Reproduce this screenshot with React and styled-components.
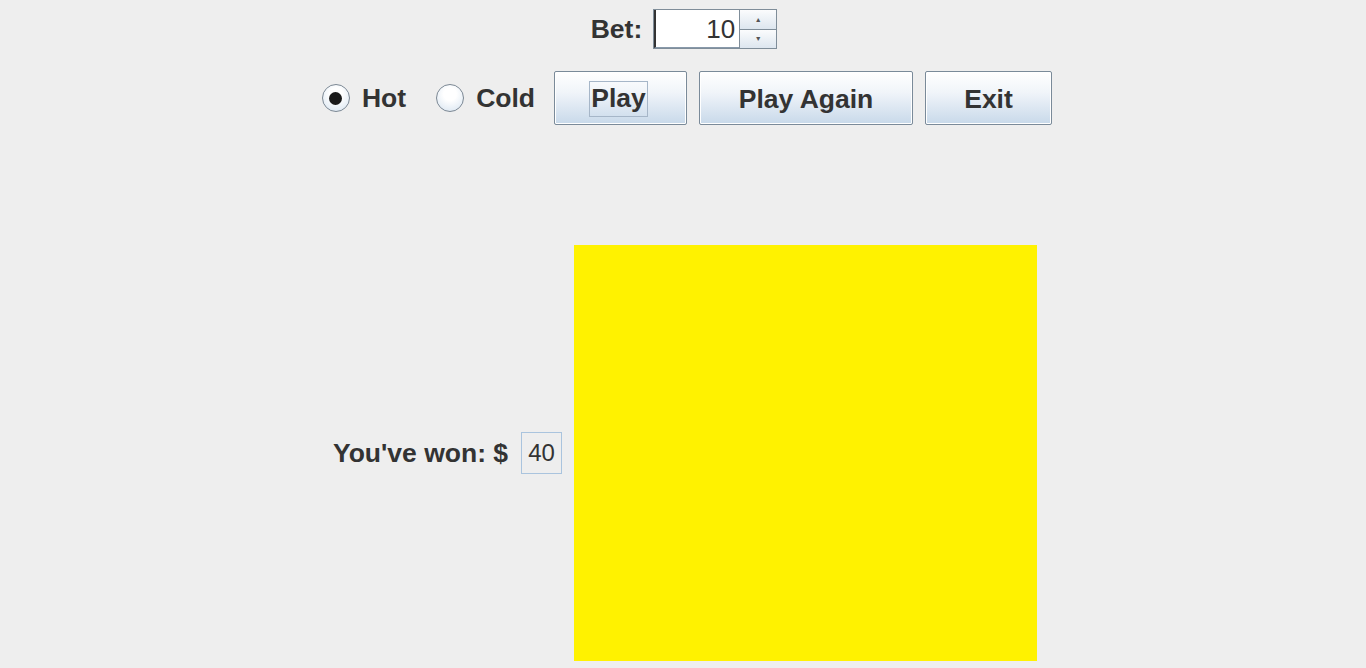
import styled, { createGlobalStyle } from "styled-components";

const GlobalStyle = createGlobalStyle`
  html, body {
    margin: 0;
    padding: 0;
    background: #eeeeee;
    font-family: "Liberation Sans", Arial, sans-serif;
    color: #333333;
  }
`;

const Page = styled.div`
  width: 1366px;
  height: 668px;
  overflow: hidden;
  display: flex;
  flex-direction: column;
  align-items: center;
`;

const BetRow = styled.div`
  display: flex;
  align-items: center;
  gap: 11px;
  margin-top: 9px;
  margin-left: 2px;
  height: 40px;
`;

const Label = styled.span`
  font-size: 26.5px;
  font-weight: bold;
  color: #333333;
  white-space: nowrap;
`;

const Spinner = styled.div`
  display: flex;
  height: 40px;
  border: 1px solid #7f8d99;
  box-sizing: border-box;
  background: #ffffff;
`;

const SpinnerField = styled.div`
  width: 85px;
  font-size: 26px;
  text-align: right;
  padding-right: 4px;
  box-sizing: border-box;
  line-height: 38px;
  color: #333333;
  border-left: 2px solid #333;
  border-bottom: 1px solid #8899aa;
`;

const Arrows = styled.div`
  display: flex;
  flex-direction: column;
  width: 36px;
  border-left: 1px solid #7f8d99;
`;

const Arrow = styled.div`
  flex: 1;
  display: flex;
  align-items: center;
  justify-content: center;
  background: linear-gradient(#fbfcfd, #dde6ef);
  border-top: ${({ $down }) => ($down ? "1px solid #7f8d99" : "none")};
  color: #555;
  font-size: 7px;
`;

const ControlRow = styled.div`
  display: flex;
  align-items: center;
  margin-top: 22px;
  margin-left: 8px;
  height: 54px;
`;

const Radio = styled.label`
  display: flex;
  align-items: center;
  gap: 12px;
  margin-right: ${({ $gap }) => $gap}px;
`;

const Circle = styled.span`
  width: 28px;
  height: 28px;
  border-radius: 50%;
  border: 1px solid #7c8894;
  box-sizing: border-box;
  background: radial-gradient(circle at 50% 35%, #ffffff 30%, #d5e2ef 100%);
  display: flex;
  align-items: center;
  justify-content: center;
  &::after {
    content: "";
    display: ${({ $checked }) => ($checked ? "block" : "none")};
    width: 13px;
    height: 13px;
    border-radius: 50%;
    background: #1a1a1a;
  }
`;

const Buttons = styled.div`
  display: flex;
  gap: 12px;
`;

const Button = styled.button`
  width: ${({ $w }) => $w}px;
  height: 54px;
  border: 1px solid #7a8a99;
  border-radius: 2px;
  background: linear-gradient(#ffffff 0%, #f0f4f9 40%, #c8d9ea 100%);
  font-family: "Liberation Sans", Arial, sans-serif;
  font-size: 26.5px;
  font-weight: bold;
  color: #333333;
  display: flex;
  align-items: center;
  justify-content: center;
  padding: 0;
  padding-top: 2px;
  box-shadow: inset 0 0 0 1px #ffffff;
`;

const Focus = styled.span`
  border: 1px solid #a6b6c8;
  padding: 4px 1px 6px 1px;
  line-height: 24px;
  margin-left: -4px;
`;

const ResultRow = styled.div`
  display: flex;
  align-items: center;
  margin-top: 120px;
  margin-left: 4px;
`;

const WonField = styled.div`
  width: 41px;
  height: 42px;
  box-sizing: border-box;
  border: 1px solid #aac4de;
  margin-left: 13px;
  margin-right: 12px;
  font-size: 24px;
  line-height: 40px;
  text-align: center;
  color: #333333;
`;

const Board = styled.div`
  width: 463px;
  height: 416px;
  background: #fff200;
`;

export default function App() {
  return (
    <Page>
      <GlobalStyle />
      <BetRow>
        <Label>Bet:</Label>
        <Spinner>
          <SpinnerField>10</SpinnerField>
          <Arrows>
            <Arrow>▲</Arrow>
            <Arrow $down>▼</Arrow>
          </Arrows>
        </Spinner>
      </BetRow>
      <ControlRow>
        <Radio $gap={30}>
          <Circle $checked />
          <Label>Hot</Label>
        </Radio>
        <Radio $gap={19}>
          <Circle />
          <Label>Cold</Label>
        </Radio>
        <Buttons>
          <Button $w={133}>
            <Focus>Play</Focus>
          </Button>
          <Button $w={214}>Play Again</Button>
          <Button $w={127}>Exit</Button>
        </Buttons>
      </ControlRow>
      <ResultRow>
        <Label>You've won: $</Label>
        <WonField>40</WonField>
        <Board />
      </ResultRow>
    </Page>
  );
}
